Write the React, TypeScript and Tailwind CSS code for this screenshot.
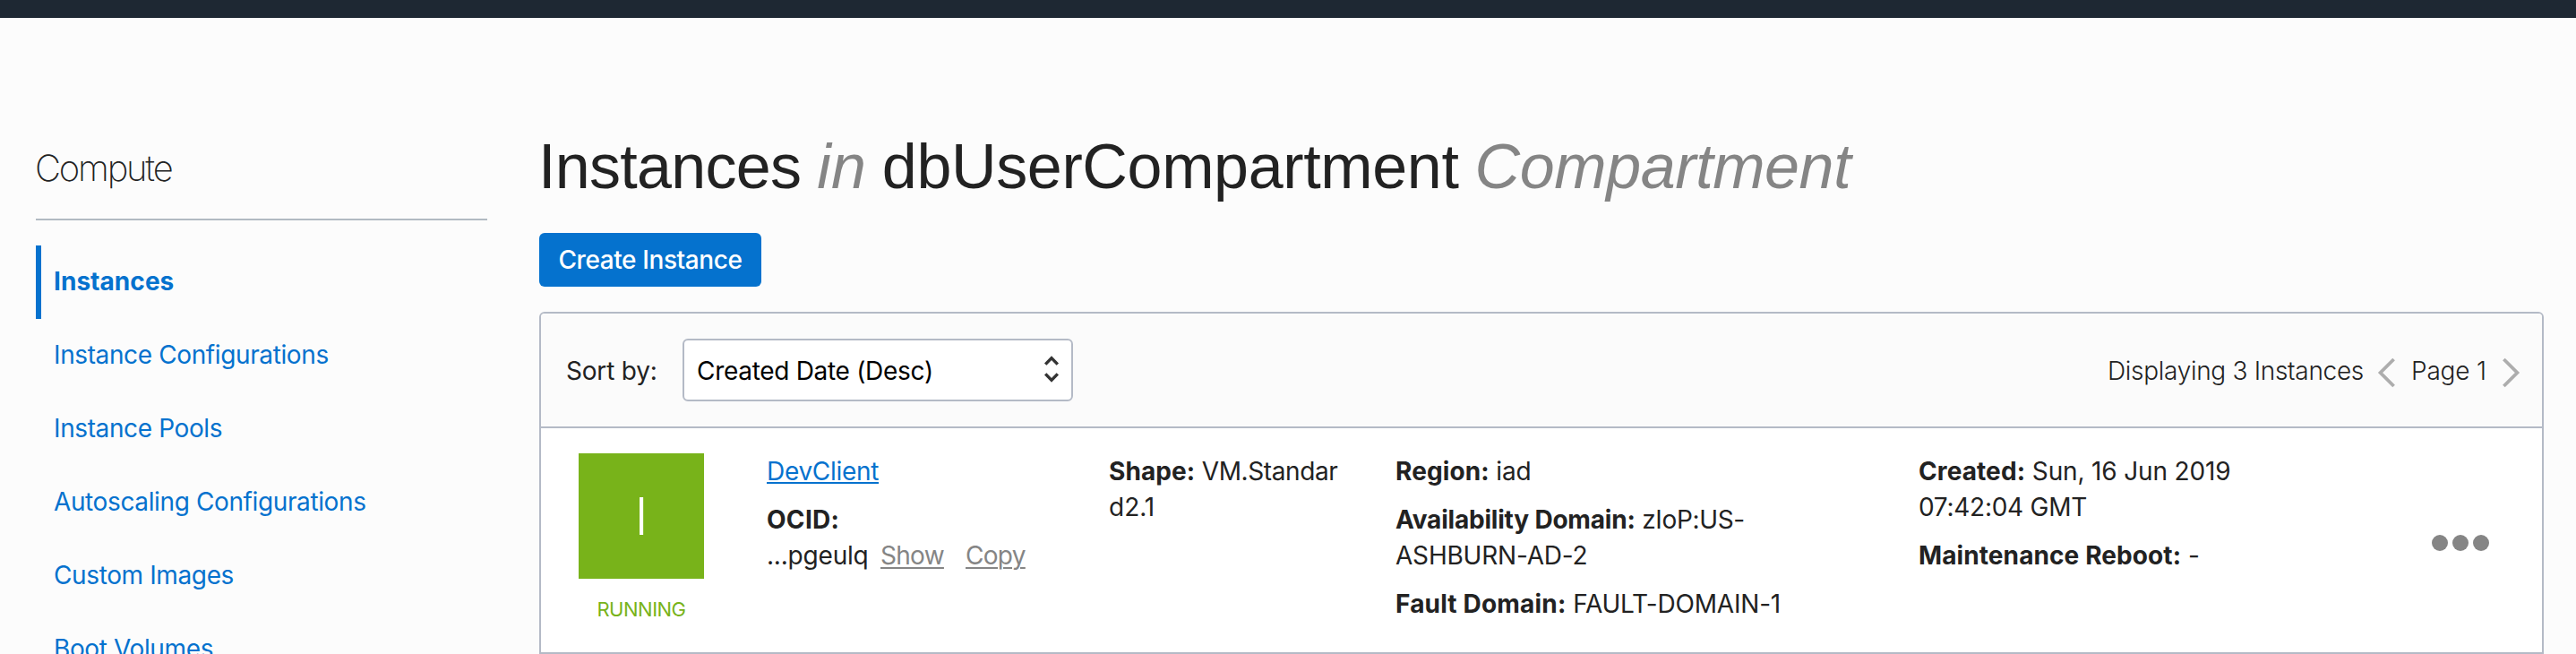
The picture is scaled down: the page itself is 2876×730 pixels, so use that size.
import React from "react";

const navItems = [
  "Instance Configurations",
  "Instance Pools",
  "Autoscaling Configurations",
  "Custom Images",
  "Boot Volumes",
];

function Label({ children }: { children: React.ReactNode }) {
  return <b className="font-bold tracking-[0.1px]">{children}</b>;
}

function Sidebar() {
  return (
    <aside className="w-[562px] shrink-0 pl-10 pt-[140px]">
      <h2 className="h-[86px] w-[504px] border-b-2 border-[#b1bac2] text-[40px] font-extralight leading-[56px] tracking-[-2.2px]">
        <span className="-ml-px">Compute</span>
      </h2>
      <ul className="mt-7 w-[504px] text-[#0572ce]">
        <li className="h-[82px] border-l-6 border-[#0572ce] pl-3.5 font-bold leading-[80px] tracking-[0.05px]">
          Instances
        </li>
        {navItems.map((item) => (
          <li key={item} className="h-[82px] pl-5 leading-[80px] tracking-[-0.38px]">
            {item}
          </li>
        ))}
      </ul>
    </aside>
  );
}

function SortSelect() {
  return (
    <div className="ml-[27px] flex h-[70px] w-[436px] items-center justify-between rounded-md border-2 border-[#b4bac6] bg-white pl-[14px] pr-3 text-black">
      <span className="pt-px tracking-[-0.3px]">Created Date (Desc)</span>
      <svg width="20" height="32" viewBox="0 0 20 32" fill="none" stroke="#333" strokeWidth="3.4">
        <path d="M3.2 9.6 10 2.6 16.8 9.6M3.2 20.4 10 27.4 16.8 20.4" />
      </svg>
    </div>
  );
}

function Pagination() {
  return (
    <div className="flex items-center pt-px font-light">
      <span className="w-[301px] tracking-[-0.3px]">Displaying 3 Instances</span>
      <svg className="mt-1" width="20" height="36" viewBox="0 0 20 36" fill="none" stroke="#adadad" strokeWidth="3.8">
        <path d="M18.6 3 3.6 18 18.6 33" />
      </svg>
      <span className="ml-[18px] w-[102px] tracking-[-0.2px]">Page 1</span>
      <svg className="mt-1" width="20" height="36" viewBox="0 0 20 36" fill="none" stroke="#adadad" strokeWidth="3.8">
        <path d="M1.4 3 16.4 18 1.4 33" />
      </svg>
    </div>
  );
}

function InstanceRow() {
  return (
    <div className="flex h-[250px] bg-white pl-[42px] pt-7">
      <div className="w-[210px]">
        <div className="flex h-[140px] w-[140px] items-center justify-center bg-[#78b31a] text-[58px] font-light leading-none text-white">
          I
        </div>
        <div className="mt-[14px] w-[140px] text-center text-[22px] tracking-[-0.5px] text-[#78b31a]">RUNNING</div>
      </div>
      <div className="w-[382px] tracking-[-0.3px]">
        <p className="text-[#0572ce]">
          <span className="inline-block h-[34px] border-b-2 border-[#0572ce]">DevClient</span>
        </p>
        <p className="mt-[14px]">
          <b className="font-bold tracking-[0.3px]">OCID:</b>
        </p>
        <p className="flex text-[#858585]">
          <span className="w-[127px] tracking-[-0.2px] text-[#222]">...pgeulq</span>
          <span className="w-[95px] tracking-[-0.7px] underline decoration-2 underline-offset-[3px]">Show</span>
          <span className="tracking-[-0.7px] underline decoration-2 underline-offset-[3px]">Copy</span>
        </p>
      </div>
      <div className="w-[320px]">
        <p className="w-[260px] tracking-[-0.4px]">
          <Label>Shape:</Label> VM.Standar
          <br />
          <span className="tracking-normal">d2.1</span>
        </p>
      </div>
      <div className="w-[584px] tracking-[-0.2px]">
        <p>
          <Label>Region:</Label> iad
        </p>
        <p className="mt-[14px]">
          <b className="font-bold">Availability Domain:</b> <span className="tracking-[-0.35px]">zIoP:US-</span>
          <br />
          ASHBURN-AD-2
        </p>
        <p className="mt-[14px]">
          <b className="font-bold tracking-[0.18px]">Fault Domain:</b> FAULT-DOMAIN-1
        </p>
      </div>
      <div className="w-[572px] tracking-[-0.15px]">
        <p>
          <Label>Created:</Label> Sun, 16 Jun 2019
          <br />
          <span className="tracking-[-0.27px]">07:42:04 GMT</span>
        </p>
        <p className="mt-[14px]">
          <Label>Maintenance Reboot:</Label> -
        </p>
      </div>
      <svg className="mt-[90px]" width="66" height="20" viewBox="0 0 66 20" fill="#858585">
        <circle cx="10" cy="10" r="9" />
        <circle cx="33" cy="10" r="9" />
        <circle cx="56" cy="10" r="9" />
      </svg>
    </div>
  );
}

export default function App() {
  return (
    <div className="h-[730px] w-[2876px] overflow-hidden bg-[#fcfcfc] font-['Inter',sans-serif] text-[28px] leading-10 text-[#222]">
      <div className="h-5 bg-[#1e2833]" />
      <div className="flex">
        <Sidebar />
        <main className="ml-10 w-[2238px] pt-[126px]">
          <h1 className="-ml-px flex h-[114px] gap-[18px] whitespace-nowrap font-['Liberation_Sans',sans-serif] text-[70px] leading-[80px]">
            <span className="tracking-[-0.7px]">Instances</span>
            <i className="text-[#858585]">in</i>
            <span className="tracking-[-0.35px]">dbUserCompartment</span>
            <i className="tracking-[-0.4px] text-[#858585]">Compartment</i>
          </h1>
          <button className="block h-[60px] w-[248px] rounded-md bg-[#0572ce] font-medium tracking-[-0.4px] text-white">
            Create Instance
          </button>
          <section className="mt-7 h-[382px] overflow-hidden rounded-t-md border-2 border-[#b4bac6]">
            <div className="flex h-[128px] items-center justify-between border-b-2 border-[#b4bac6] bg-[#fbfbfb] pl-7 pr-6">
              <div className="flex items-center">
                <span className="w-[103px] whitespace-nowrap pt-px tracking-[-0.2px]">Sort by:</span>
                <SortSelect />
              </div>
              <Pagination />
            </div>
            <InstanceRow />
          </section>
        </main>
      </div>
    </div>
  );
}
